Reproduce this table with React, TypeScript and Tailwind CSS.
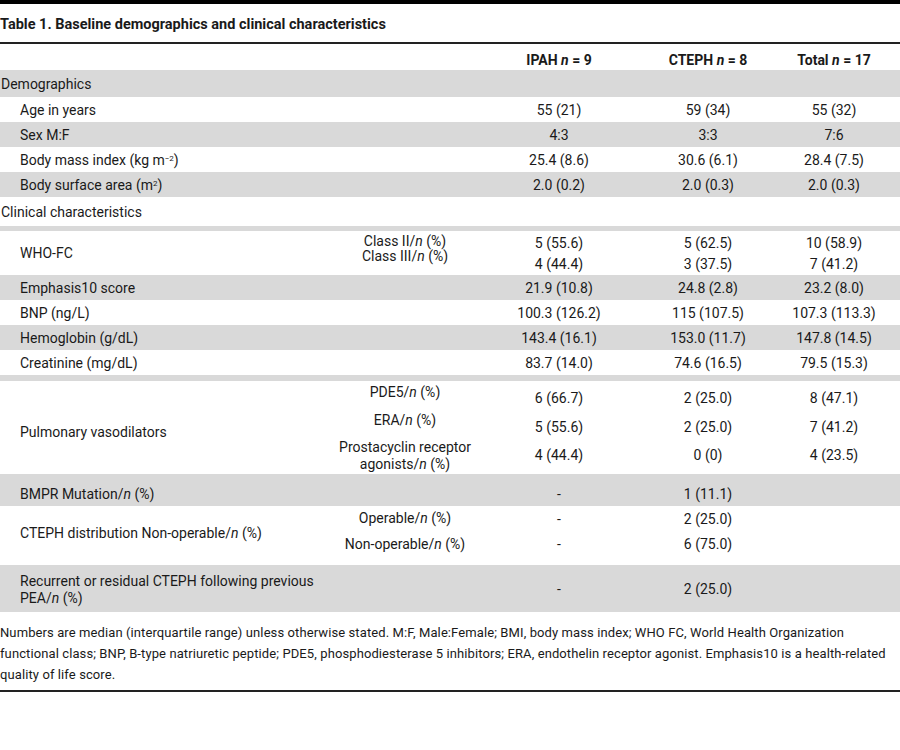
import React from "react";

const COLS = "grid grid-cols-[340px_130px_178px_120px_132px]";
const N = () => <span className="italic">n</span>;

function SimpleRow({
  label,
  vals,
  gray,
  h = "h-[25px]",
  section,
}: {
  label: React.ReactNode;
  vals?: string[];
  gray?: boolean;
  h?: string;
  section?: boolean;
}) {
  return (
    <div className={`${COLS} ${h} ${gray ? "bg-[#d9d9d9]" : "bg-white"} items-center`}>
      <div className={section ? "pl-[1px]" : "pl-5"}>{label}</div>
      <div />
      {(vals ?? ["", "", ""]).map((v, i) => (
        <div key={i} className="text-center">
          {v}
        </div>
      ))}
    </div>
  );
}

export default function App() {
  return (
    <div className="w-[900px] h-[750px] bg-white text-[#1a1a1a] font-['Roboto',sans-serif] text-[14px] leading-[20px]">
      <div className="h-[4px] bg-black" />
      <div className="h-[38px] flex items-center pt-[3px] text-[14.5px] font-bold">
        Table 1. Baseline demographics and clinical characteristics
      </div>
      <div className="h-[2px] bg-[#222]" />

      {/* header */}
      <div className={`${COLS} h-[26px] items-center pt-[5px] font-bold`}>
        <div />
        <div />
        <div className="text-center">
          IPAH <N /> = 9
        </div>
        <div className="text-center">
          CTEPH <N /> = 8
        </div>
        <div className="text-center">
          Total <N /> = 17
        </div>
      </div>

      <SimpleRow label="Demographics" section gray h="h-[27px]" />
      <SimpleRow label="Age in years" vals={["55 (21)", "59 (34)", "55 (32)"]} />
      <SimpleRow label="Sex M:F" vals={["4:3", "3:3", "7:6"]} gray />
      <SimpleRow
        label={
          <>
            Body mass index (kg m<sup className="text-[8px]">−2</sup>)
          </>
        }
        vals={["25.4 (8.6)", "30.6 (6.1)", "28.4 (7.5)"]}
      />
      <SimpleRow
        label={
          <>
            Body surface area (m<sup className="text-[8px]">2</sup>)
          </>
        }
        vals={["2.0 (0.2)", "2.0 (0.3)", "2.0 (0.3)"]}
        gray
      />
      <SimpleRow label="Clinical characteristics" section h="h-[29px]" />
      <div className="h-[5px] bg-[#d9d9d9]" />

      {/* WHO-FC */}
      <div className={`${COLS} h-[44px]`}>
        <div className="pl-5 flex items-center">
          <span>WHO-FC</span>
        </div>
        <div className="flex flex-col items-center pt-[3px] leading-[15px] whitespace-nowrap">
          <div>
            Class II/<N /> (%)
          </div>
          <div>
            Class III/<N /> (%)
          </div>
        </div>
        {[
          ["5 (55.6)", "4 (44.4)"],
          ["5 (62.5)", "3 (37.5)"],
          ["10 (58.9)", "7 (41.2)"],
        ].map((c, i) => (
          <div key={i} className="flex flex-col items-center pt-[2px] leading-[21px]">
            <div>{c[0]}</div>
            <div>{c[1]}</div>
          </div>
        ))}
      </div>

      <SimpleRow label="Emphasis10 score" vals={["21.9 (10.8)", "24.8 (2.8)", "23.2 (8.0)"]} gray />
      <SimpleRow label="BNP (ng/L)" vals={["100.3 (126.2)", "115 (107.5)", "107.3 (113.3)"]} />
      <SimpleRow label="Hemoglobin (g/dL)" vals={["143.4 (16.1)", "153.0 (11.7)", "147.8 (14.5)"]} gray />
      <SimpleRow label="Creatinine (mg/dL)" vals={["83.7 (14.0)", "74.6 (16.5)", "79.5 (15.3)"]} />
      <div className="h-[6px] bg-[#d9d9d9]" />

      {/* Pulmonary vasodilators */}
      <div className={`${COLS} h-[93px]`}>
        <div className="pl-5 flex items-center pt-[8px]">
          <span>Pulmonary vasodilators</span>
        </div>
        <div className="flex flex-col items-center text-center pt-[2px] whitespace-nowrap">
          <div className="leading-[18px]">
            PDE5/<N /> (%)
          </div>
          <div className="leading-[18px] mt-[10px]">
            ERA/<N /> (%)
          </div>
          <div className="leading-[17px] mt-[10px]">
            Prostacyclin receptor
            <br />
            agonists/<N /> (%)
          </div>
        </div>
        {[
          ["6 (66.7)", "5 (55.6)", "4 (44.4)"],
          ["2 (25.0)", "2 (25.0)", "0 (0)"],
          ["8 (47.1)", "7 (41.2)", "4 (23.5)"],
        ].map((c, i) => (
          <div key={i} className="flex flex-col items-center pt-[8px] leading-[18px]">
            <div>{c[0]}</div>
            <div className="mt-[11px]">{c[1]}</div>
            <div className="mt-[10px]">{c[2]}</div>
          </div>
        ))}
      </div>

      <div className={`${COLS} h-[32px] bg-[#d9d9d9] items-center pt-[8px]`}>
        <div className="pl-5">
          BMPR Mutation/<N /> (%)
        </div>
        <div />
        <div className="text-center">-</div>
        <div className="text-center">1 (11.1)</div>
        <div />
      </div>

      {/* CTEPH distribution */}
      <div className={`${COLS} h-[59px]`}>
        <div className="pl-5 flex items-center pb-[5px]">
          <span>
            CTEPH distribution Non-operable/<N /> (%)
          </span>
        </div>
        <div className="flex flex-col items-center pt-[3px] leading-[18px] whitespace-nowrap">
          <div>
            Operable/<N /> (%)
          </div>
          <div className="mt-[8px]">
            Non-operable/<N /> (%)
          </div>
        </div>
        {[
          ["-", "-"],
          ["2 (25.0)", "6 (75.0)"],
        ].map((c, i) => (
          <div key={i} className="flex flex-col items-center pt-[4px] leading-[18px]">
            <div>{c[0]}</div>
            <div className="mt-[7px]">{c[1]}</div>
          </div>
        ))}
        <div />
      </div>

      {/* Recurrent */}
      <div className={`${COLS} h-[47px] bg-[#d9d9d9]`}>
        <div className="pl-5 flex flex-col justify-center leading-[17px] pt-[3px]">
          <div>Recurrent or residual CTEPH following previous</div>
          <div>
            PEA/<N /> (%)
          </div>
        </div>
        <div />
        <div className="flex items-center justify-center">
          <span>-</span>
        </div>
        <div className="flex items-center justify-center">
          <span>2 (25.0)</span>
        </div>
        <div />
      </div>

      {/* Footnote */}
      <div className="mt-[10px] mb-[5px] text-[13px] leading-[21px] tracking-[0.1px] whitespace-nowrap">
        <div>
          Numbers are median (interquartile range) unless otherwise stated. M:F, Male:Female; BMI, body mass index; WHO FC, World Health Organization
        </div>
        <div>
          functional class; BNP, B-type natriuretic peptide; PDE5, phosphodiesterase 5 inhibitors; ERA, endothelin receptor agonist. Emphasis10 is a health-related
        </div>
        <div>quality of life score.</div>
      </div>
      <div className="h-[2px] bg-[#222]" />
    </div>
  );
}
